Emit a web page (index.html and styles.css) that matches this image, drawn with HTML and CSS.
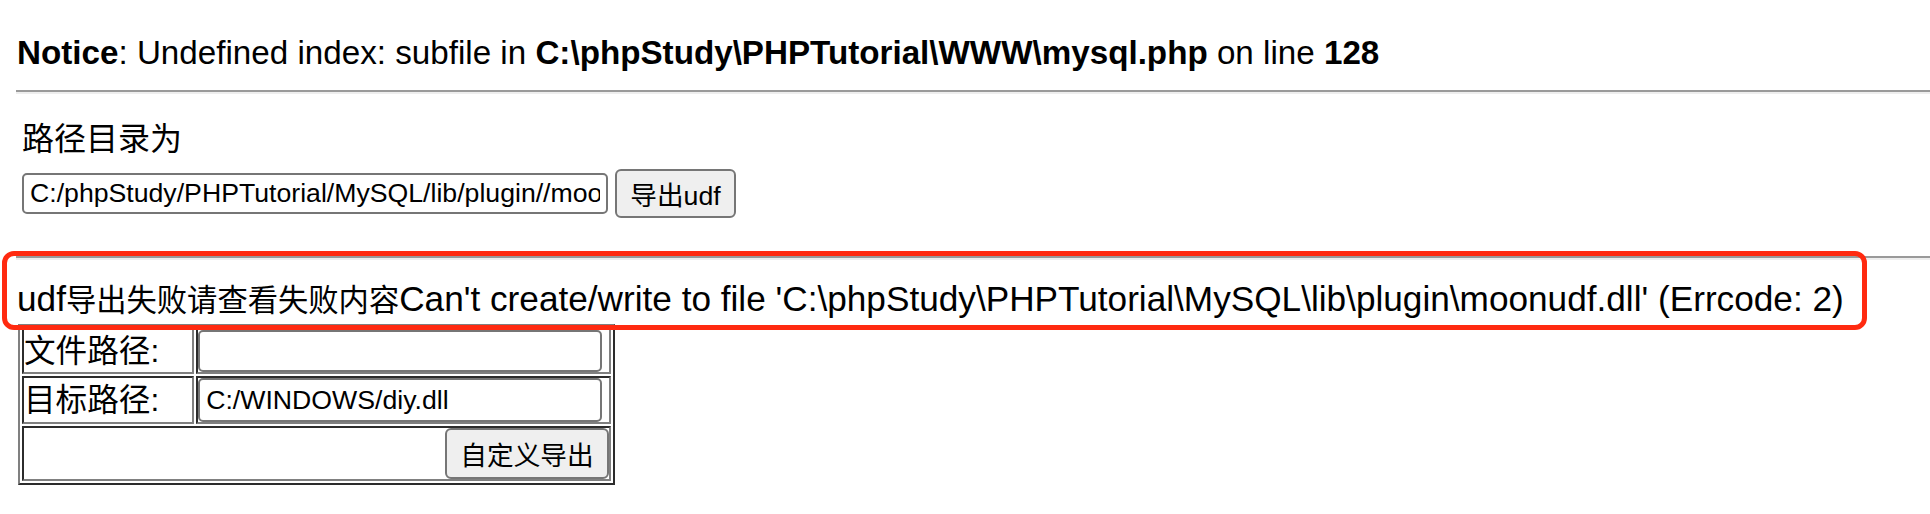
FILE: index.html
```html
<!DOCTYPE html>
<html lang="zh-CN">
<head>
<meta charset="utf-8">
<title>mysql.php</title>
<link rel="stylesheet" href="styles.css">
</head>
<body>
<div class="page">
  <div class="notice"><b>Notice</b>: Undefined index: subfile in <b>C:\phpStudy\PHPTutorial\WWW\mysql.php</b> on line <b>128</b></div>
  <hr class="rule rule-top">
  <form class="udf-form">
    <div class="dir-label">路径目录为</div>
    <div class="dir-row">
      <input class="field field-dir" type="text" value="C:/phpStudy/PHPTutorial/MySQL/lib/plugin//moonudf.dll">
      <button class="btn btn-udf" type="button">导出udf</button>
    </div>
  </form>
  <hr class="rule rule-mid">
  <div class="udf-line">udf<span class="cjk">导出失败请查看失败内容</span>Can't create/write to file 'C:\phpStudy\PHPTutorial\MySQL\lib\plugin\moonudf.dll' (Errcode: 2)</div>
  <table class="custom">
    <tr>
      <td class="lbl">文件路径:</td>
      <td class="val"><input class="field field-cell" type="text" value=""></td>
    </tr>
    <tr>
      <td class="lbl">目标路径:</td>
      <td class="val"><input class="field field-cell field-tall" type="text" value="C:/WINDOWS/diy.dll"></td>
    </tr>
    <tr>
      <td class="act" colspan="2"><button class="btn btn-custom" type="button">自定义导出</button></td>
    </tr>
  </table>
</div>
<div class="mark"></div>
</body>
</html>
```

FILE: styles.css
```css
html, body {
  margin: 0;
  padding: 0;
  background: #ffffff;
}

body {
  position: relative;
  width: 1930px;
  height: 514px;
  overflow: hidden;
  font-family: "Liberation Sans", Arial, "Noto Sans CJK SC", sans-serif;
  font-size: 33px;
  color: #000000;
}

.page {
  padding: 34px 0 0 16px;
}

.notice {
  font-size: 33.2px;
  line-height: 38px;
  padding-left: 1px;
  white-space: nowrap;
}

.rule {
  height: 0;
  margin: 0;
  border: 0;
  border-top: 2px solid #9a9a9a;
  border-bottom: 2px solid #eeeeee;
}

.rule-top {
  margin-top: 18px;
}

.udf-form {
  margin: 0;
  padding-left: 6px;
}

.dir-label {
  margin-top: 26px;
  font-size: 32px;
  line-height: 38px;
}

.dir-row {
  display: flex;
  align-items: center;
  gap: 7px;
  margin-top: 11px;
  height: 49px;
}

.field {
  box-sizing: border-box;
  font-family: "Liberation Sans", Arial, "Noto Sans CJK SC", sans-serif;
  font-size: 26.67px;
  color: #000000;
  background: #ffffff;
  border: 2px solid #767676;
  border-radius: 5px;
  padding: 0 6px;
  margin: 0;
  outline: none;
}

.field-dir {
  width: 586px;
  height: 41px;
}

.btn {
  box-sizing: border-box;
  font-family: "Liberation Sans", Arial, "Noto Sans CJK SC", sans-serif;
  font-size: 26.67px;
  color: #000000;
  background: #efefef;
  border: 2px solid #767676;
  border-radius: 6px;
  padding: 0 12px;
  margin: 0;
  white-space: nowrap;
}

.btn-udf {
  width: 121px;
  height: 49px;
}

.rule-mid {
  margin-top: 38px;
}

.udf-line {
  margin-top: 20px;
  font-size: 35.2px;
  line-height: 38px;
  padding-left: 1px;
  white-space: nowrap;
}

.udf-line .cjk {
  font-size: 30.3px;
}

.custom {
  margin: 4px 0 0 2px;
  border: 2px outset #808080;
  border-spacing: 2px;
  width: 597px;
}

.custom td {
  border: 2px inset #808080;
  padding: 0;
  font-size: 31.6px;
  line-height: 38px;
}

.lbl {
  width: 167px;
  padding-left: 2px;
  white-space: nowrap;
}

.val {
  width: 408px;
}

.field-cell {
  display: block;
  width: 404px;
  height: 42px;
}

.field-tall {
  height: 44px;
}

.act {
  text-align: right;
}

.btn-custom {
  display: inline-block;
  vertical-align: top;
  width: 164px;
  height: 51px;
}

.mark {
  position: absolute;
  left: 2px;
  top: 251px;
  width: 1865px;
  height: 79px;
  box-sizing: border-box;
  border: 5px solid #ff2a10;
  border-radius: 12px;
  pointer-events: none;
}
```
